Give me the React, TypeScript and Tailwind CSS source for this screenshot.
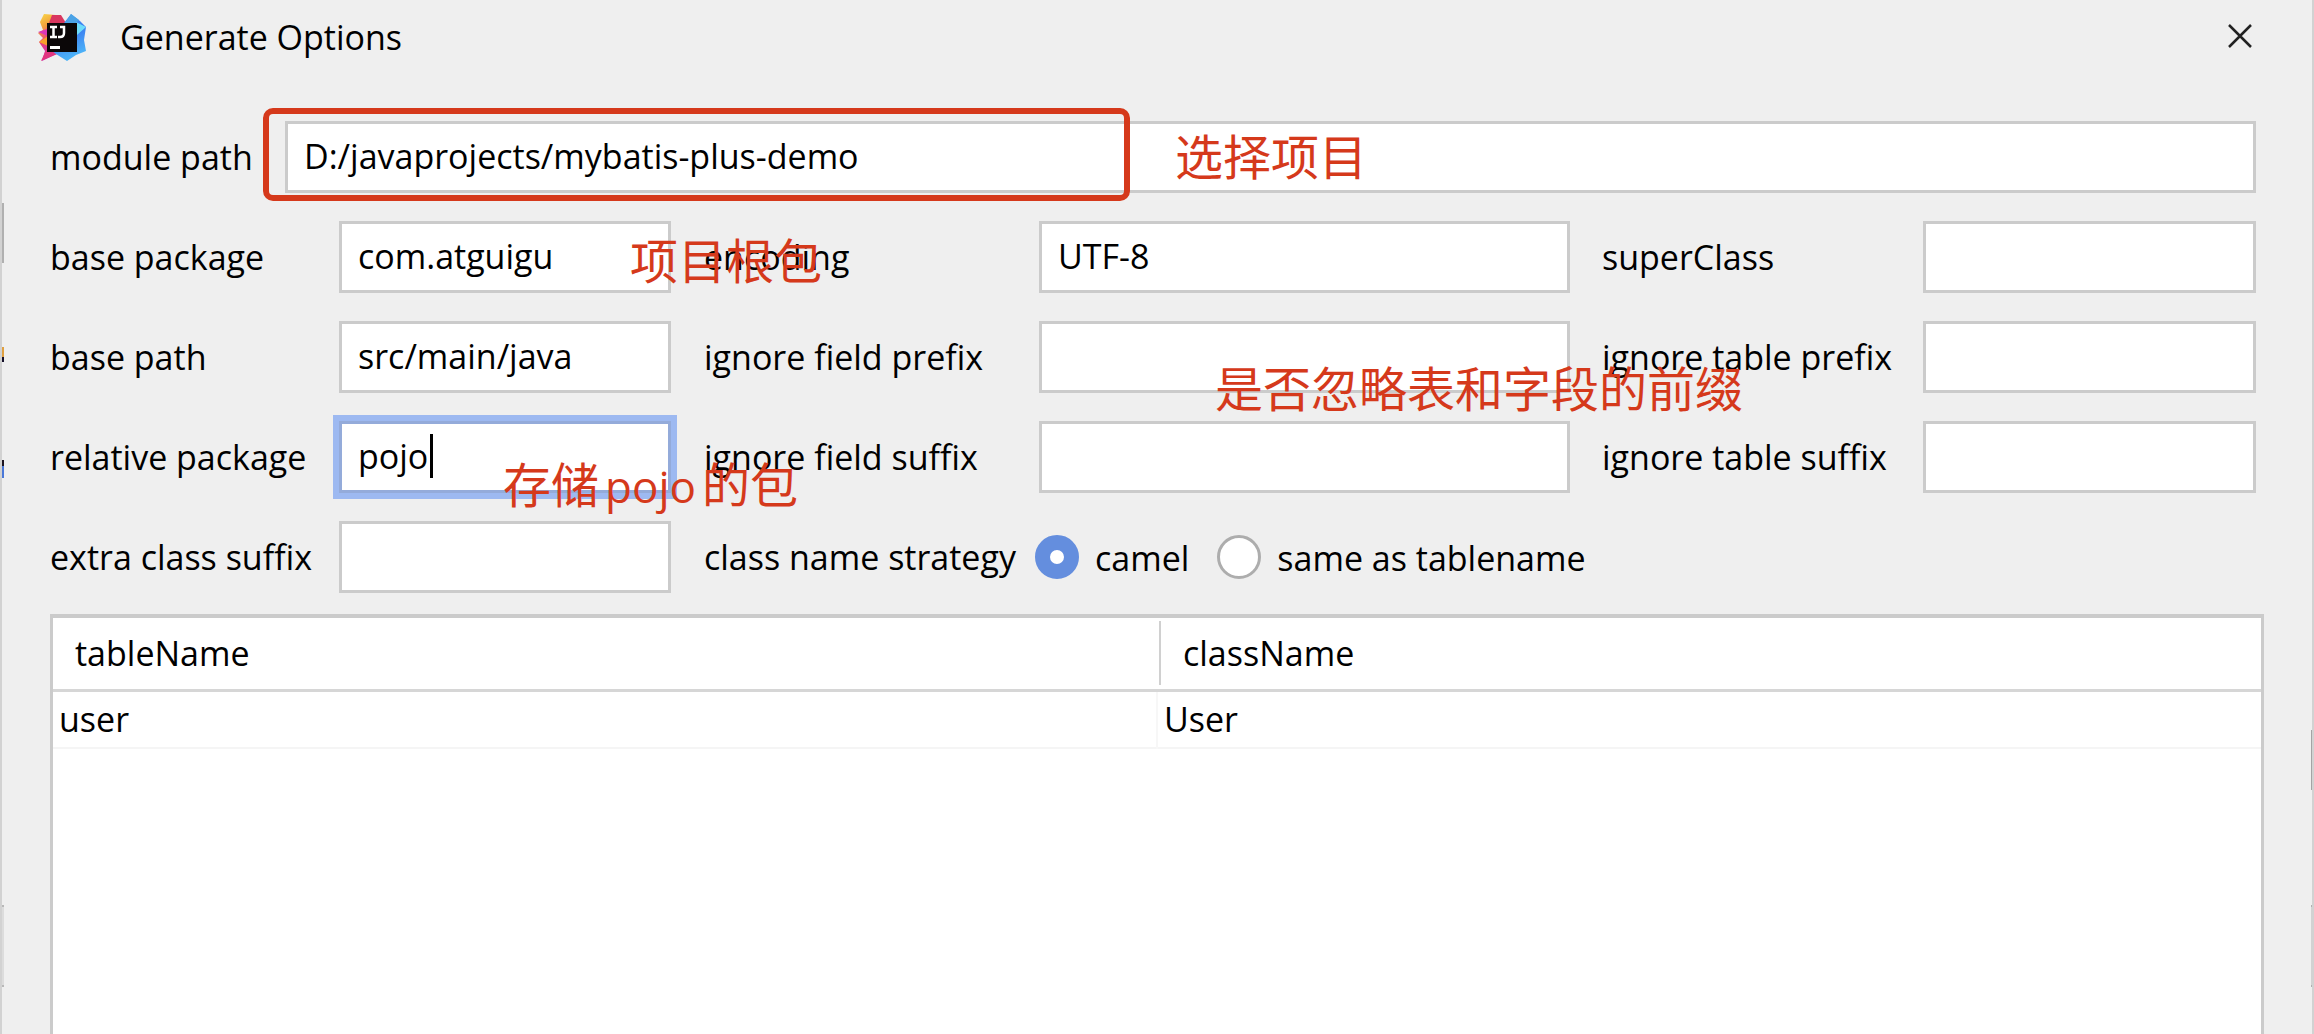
import type { ReactNode } from "react";

const box =
  "block h-[72px] w-full min-w-0 rounded-none border-[3px] px-4 pb-0.5 text-[34px] leading-[48px] text-black outline-none";

function Note({ className, children }: { className: string; children: ReactNode }) {
  return (
    <span
      className={
        "pointer-events-none absolute z-10 whitespace-nowrap text-[48px] leading-[56px] text-[#d5391b] " + className
      }
    >
      {children}
    </span>
  );
}

function Field({
  id,
  label,
  value = "",
  focused = false,
  note,
}: {
  id: string;
  label: string;
  value?: string;
  focused?: boolean;
  note?: ReactNode;
}) {
  return (
    <>
      <label htmlFor={id} className="whitespace-nowrap">
        {label}
      </label>
      <div className="relative">
        <input
          id={id}
          type="text"
          defaultValue={value}
          className={
            box + (focused ? " border-[#94abda] bg-white ring-[6px] ring-[#9db9f1]" : " border-[#cbcbcb] bg-white")
          }
        />
        {focused && <span className="absolute top-[13px] left-[91px] h-11 w-[3px] bg-black" />}
        {note}
      </div>
    </>
  );
}

function Logo() {
  return (
    <svg viewBox="0 0 48 48" className="size-12" role="img" aria-label="IntelliJ IDEA">
      <defs>
        <linearGradient id="warm" x1="0" y1="0" x2="0.3" y2="1">
          <stop offset="0" stopColor="#f9dc4a" />
          <stop offset="0.3" stopColor="#f2a33c" />
          <stop offset="0.6" stopColor="#e8407a" />
          <stop offset="1" stopColor="#c433c8" />
        </linearGradient>
        <linearGradient id="cool" x1="0" y1="0" x2="0.3" y2="1">
          <stop offset="0" stopColor="#4aa8f0" />
          <stop offset="0.5" stopColor="#3b7cf0" />
          <stop offset="1" stopColor="#4cb2f8" />
        </linearGradient>
      </defs>
      <path d="M6 1 18 2 24 10 24 38 4 48 7 38 1 29 5 25 0 20 5 17 2 9Z" fill="url(#warm)" />
      <path d="M14 2 23 2 28 10 11 10Z" fill="#d9365f" />
      <path d="M0 19 12 15 12 24Z" fill="#d936b6" />
      <path d="M1 29 10 23 10 33Z" fill="#f7a02b" />
      <path d="M3 48 9 35 24 39Z" fill="#e0357f" />
      <path d="M33 1 42 8 48 14 46 27 48 38 38 42 29 48 18 41 14 38 26 30 26 10Z" fill="url(#cool)" />
      <path d="M38 9 48 14 39 22Z" fill="#6ddcfb" />
      <path d="M33 1 41 7 38 10 27 10Z" fill="#4ba3e6" />
      <path d="M9 10H39V39H9Z" fill="#0b0708" />
      <path
        d="M12 14H19M15.500 14V24M12 24H19M22 14H26V20Q26 24 22 24H20"
        fill="none"
        stroke="#fff"
        strokeWidth="2.500"
      />
      <path d="M12 33H22V36H12Z" fill="#fff" />
    </svg>
  );
}

function Strategy({ id, label, checked = false }: { id: string; label: string; checked?: boolean }) {
  return (
    <div className="flex items-center gap-4">
      <input
        id={id}
        type="radio"
        name="strategy"
        defaultChecked={checked}
        className="size-11 shrink-0 appearance-none rounded-full border-[3px] border-[#adadad] bg-white checked:border-[15px] checked:border-[#648ede]"
      />
      <label htmlFor={id} className="pt-0.5 whitespace-nowrap">
        {label}
      </label>
    </div>
  );
}

export default function App() {
  return (
    <main className="relative flex min-h-screen flex-col overflow-hidden border-x-2 border-[#d2d2d2] bg-[#efefef] px-12 font-['Open_Sans','Noto_Sans_CJK_SC',sans-serif] text-[34px] leading-[48px] text-black">
      {/* Slivers of the window behind the dialog */}
      <span className="absolute top-[203px] -left-0.5 h-[60px] w-1 bg-[#b0b0b0]" />
      <span className="absolute top-[347px] -left-0.5 h-[10px] w-1 bg-[#e0a040]" />
      <span className="absolute top-[357px] -left-0.5 h-[5px] w-1 bg-[#15102a]" />
      <span className="absolute top-[460px] -left-0.5 h-[6px] w-1 bg-[#1c1420]" />
      <span className="absolute top-[466px] -left-0.5 h-[12px] w-1 bg-[#4a78d8]" />
      <span className="absolute top-[905px] -left-0.5 h-[82px] w-1 border-y-2 border-[#b8b8b8] bg-[#dcdcdc]" />
      <span className="absolute top-[730px] -right-0.5 h-[60px] w-[3px] bg-[#a4a4a4]" />
      <span className="absolute top-[905px] -right-0.5 h-[82px] w-[3px] border-y-2 border-[#b0b0b0] bg-[#d2d2d2]" />

      <header className="-ml-3 flex h-[74px] items-center gap-[34px]">
        <Logo />
        <h1 className="grow">Generate Options</h1>
        <button type="button" aria-label="Close" className="mr-2 p-1 pb-1.5">
          <svg viewBox="0 0 24 24" className="size-6" fill="none" stroke="#222" strokeWidth="2.500">
            <path d="M1 1 23 23M23 1 1 23" />
          </svg>
        </button>
      </header>

      <form className="mt-[47px] mr-2 flex flex-col gap-7" onSubmit={(e) => e.preventDefault()}>
        <div className="grid grid-cols-[235px_1fr] items-center">
          <Field
            id="module"
            label="module path"
            value="D:/javaprojects/mybatis-plus-demo"
            note={
              <>
                <span className="pointer-events-none absolute -top-[13px] -left-[22px] h-[93px] w-[44%] rounded-[10px] border-[6px] border-[#d5391b]" />
                <Note className="top-2 left-[890px]">选择项目</Note>
              </>
            }
          />
        </div>

        <div className="grid grid-cols-[289px_minmax(0,332fr)_33px_335px_minmax(0,531fr)_32px_321px_minmax(0,333fr)] items-center gap-y-7">
          <Field
            id="package"
            label="base package"
            value="com.atguigu"
            note={<Note className="top-3 left-[291px]">项目根包</Note>}
          />
          <span />
          <Field id="encoding" label="encoding" value="UTF-8" />
          <span />
          <Field id="super" label="superClass" />

          <Field id="path" label="base path" value="src/main/java" />
          <span />
          <Field
            id="field-prefix"
            label="ignore field prefix"
            note={<Note className="top-10 left-[176px]">是否忽略表和字段的前缀</Note>}
          />
          <span />
          <Field id="table-prefix" label="ignore table prefix" />

          <Field
            id="relative"
            label="relative package"
            value="pojo"
            focused
            note={
              <Note className="top-9 left-[164px]">
                存储<span className="mx-1.5 text-[44px]">pojo</span>的包
              </Note>
            }
          />
          <span />
          <Field id="field-suffix" label="ignore field suffix" />
          <span />
          <Field id="table-suffix" label="ignore table suffix" />

          <Field id="extra" label="extra class suffix" />
          <span />
          <span id="strategy-label" className="whitespace-nowrap">
            class name strategy
          </span>
          <div role="radiogroup" aria-labelledby="strategy-label" className="-ml-1 flex items-center gap-7">
            <Strategy id="camel" label="camel" checked />
            <Strategy id="same" label="same as tablename" />
          </div>
        </div>
      </form>

      <div className="mt-[21px] grow border-x-[3px] border-t-4 border-[#cbcbcb] bg-white">
        <table className="w-full table-fixed border-collapse text-left">
          <thead>
            <tr className="h-[72px] border-b-[3px] border-[#d6d6d6]">
              <th className="p-0 pl-[22px] font-normal">tableName</th>
              <th className="p-0 font-normal">
                <div className="ml-0.5 border-l-2 border-[#d0d0d0] py-2 pl-[22px]">className</div>
              </th>
            </tr>
          </thead>
          <tbody>
            <tr className="h-[58px] border-b-2 border-[#f5f5f5]">
              <td className="border-r-2 border-[#f7f7f7] p-0 pl-1.5">user</td>
              <td className="p-0 pl-1.5">User</td>
            </tr>
          </tbody>
        </table>
      </div>
    </main>
  );
}
